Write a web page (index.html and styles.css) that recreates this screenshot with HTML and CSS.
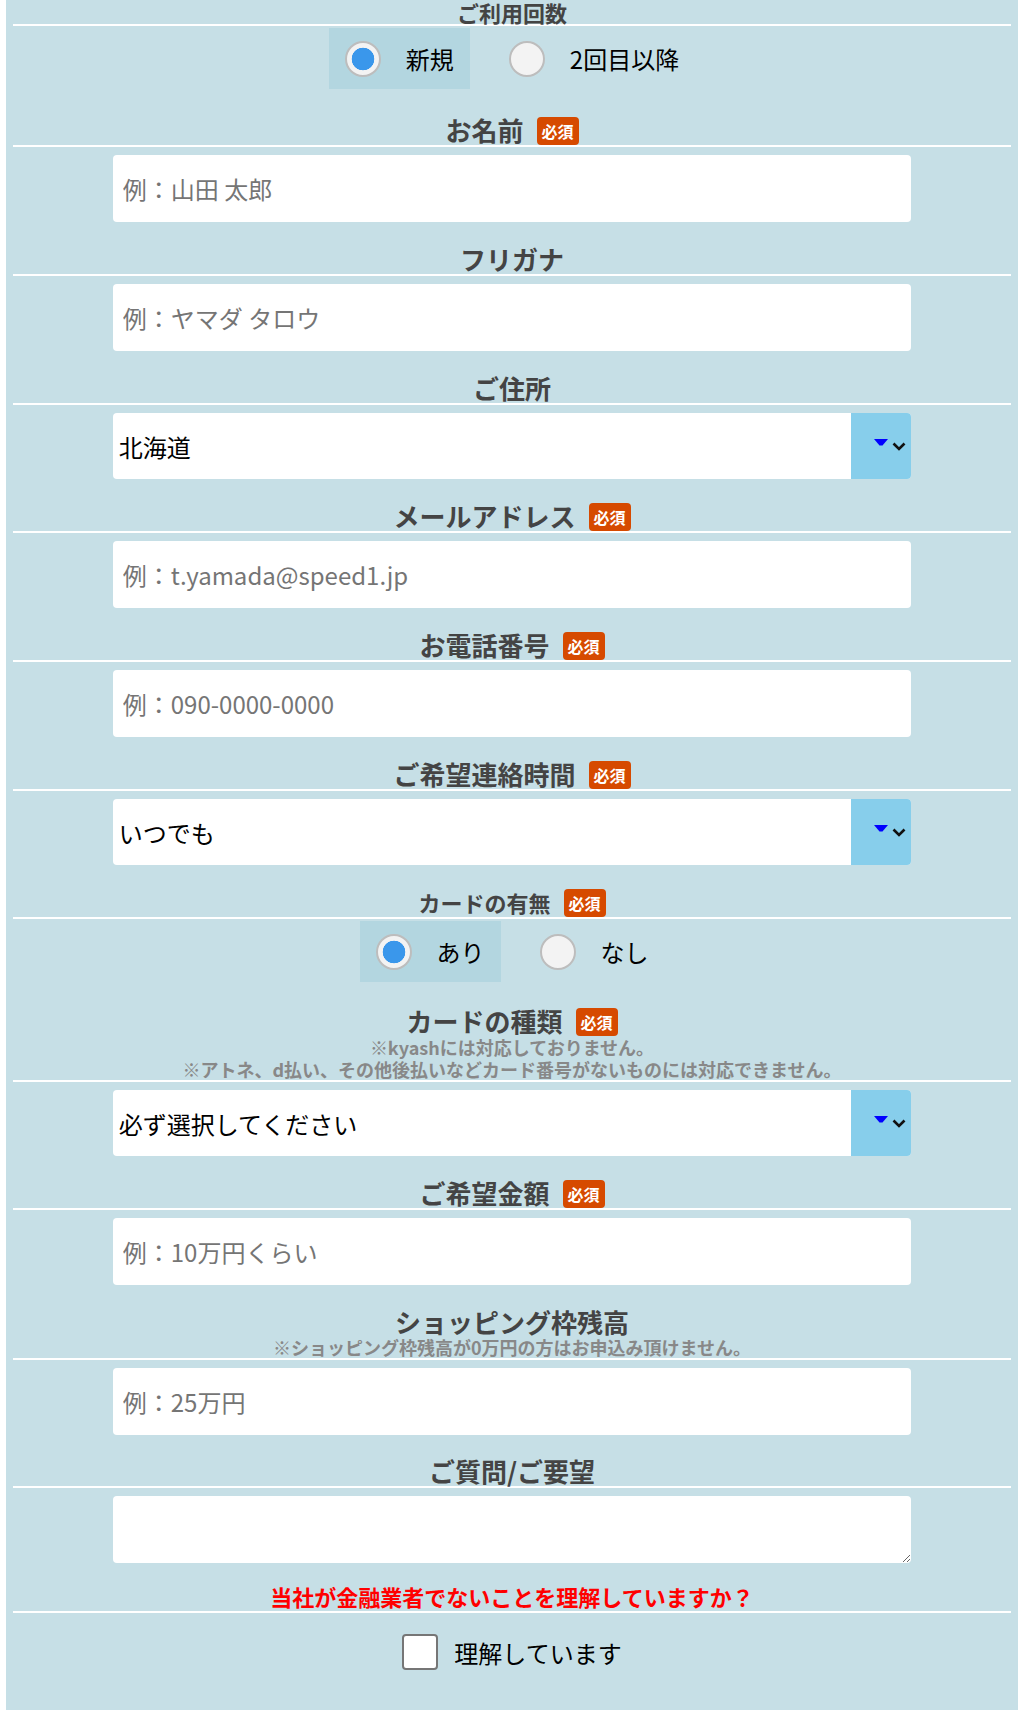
FILE: index.html
```html
<!DOCTYPE html>
<html lang="ja">
<head>
  <meta charset="utf-8">
  <title>お申込みフォーム</title>
  <link rel="stylesheet" href="styles.css">
</head>
<body>
  <div class="page">
    <form class="entry-form">
      <!-- ご利用回数 -->
      <div class="field field-radio">
        <div class="field-head">
          <div class="field-title"><h2 class="label label-sm label-top">ご利用回数</h2></div>
        </div>
        <div class="radio-group">
          <label class="radio-item is-checked"><input type="radio" name="times" checked><span>新規</span></label>
          <label class="radio-item"><input type="radio" name="times"><span>2回目以降</span></label>
        </div>
      </div>

      <div class="field">
        <div class="field-head">
          <div class="field-title"><h2 class="label">お名前</h2><span class="badge">必須</span></div>
        </div>
        <input class="text-input" type="text" placeholder="例：山田 太郎">
      </div>

      <div class="field">
        <div class="field-head">
          <div class="field-title"><h2 class="label">フリガナ</h2></div>
        </div>
        <input class="text-input" type="text" placeholder="例：ヤマダ タロウ">
      </div>

      <div class="field">
        <div class="field-head">
          <div class="field-title"><h2 class="label">ご住所</h2></div>
        </div>
        <div class="select-wrap">
          <select class="select">
            <option>北海道</option>
            <option>青森県</option>
            <option>岩手県</option>
          </select>
          <span class="select-arrow">
            <svg class="arrow-tri" width="14" height="7" viewBox="0 0 14 7"><path d="M0 0H14L8.5 6.5H5.5Z" fill="#0000ff"/></svg>
            <svg class="arrow-chev" width="14" height="9" viewBox="0 0 14 9"><path d="M1.5 1.5L7 7L12.5 1.5" fill="none" stroke="#111" stroke-width="2.6"/></svg>
          </span>
        </div>
      </div>

      <div class="field">
        <div class="field-head">
          <div class="field-title"><h2 class="label">メールアドレス</h2><span class="badge">必須</span></div>
        </div>
        <input class="text-input" type="email" placeholder="例：t.yamada@speed1.jp">
      </div>

      <div class="field">
        <div class="field-head">
          <div class="field-title"><h2 class="label">お電話番号</h2><span class="badge">必須</span></div>
        </div>
        <input class="text-input" type="tel" placeholder="例：090-0000-0000">
      </div>

      <div class="field">
        <div class="field-head">
          <div class="field-title"><h2 class="label">ご希望連絡時間</h2><span class="badge">必須</span></div>
        </div>
        <div class="select-wrap">
          <select class="select">
            <option>いつでも</option>
            <option>午前中</option>
            <option>午後</option>
          </select>
          <span class="select-arrow">
            <svg class="arrow-tri" width="14" height="7" viewBox="0 0 14 7"><path d="M0 0H14L8.5 6.5H5.5Z" fill="#0000ff"/></svg>
            <svg class="arrow-chev" width="14" height="9" viewBox="0 0 14 9"><path d="M1.5 1.5L7 7L12.5 1.5" fill="none" stroke="#111" stroke-width="2.6"/></svg>
          </span>
        </div>
      </div>

      <!-- カードの有無 -->
      <div class="field field-radio field-card">
        <div class="field-head">
          <div class="field-title"><h2 class="label label-sm">カードの有無</h2><span class="badge">必須</span></div>
        </div>
        <div class="radio-group">
          <label class="radio-item is-checked"><input type="radio" name="card" checked><span>あり</span></label>
          <label class="radio-item"><input type="radio" name="card"><span>なし</span></label>
        </div>
      </div>

      <div class="field">
        <div class="field-head">
          <div class="field-title"><h2 class="label">カードの種類</h2><span class="badge">必須</span></div>
          <p class="note">※kyashには対応しておりません。</p>
          <p class="note">※アトネ、d払い、その他後払いなどカード番号がないものには対応できません。</p>
        </div>
        <div class="select-wrap">
          <select class="select">
            <option>必ず選択してください</option>
            <option>VISA</option>
            <option>Mastercard</option>
            <option>JCB</option>
          </select>
          <span class="select-arrow">
            <svg class="arrow-tri" width="14" height="7" viewBox="0 0 14 7"><path d="M0 0H14L8.5 6.5H5.5Z" fill="#0000ff"/></svg>
            <svg class="arrow-chev" width="14" height="9" viewBox="0 0 14 9"><path d="M1.5 1.5L7 7L12.5 1.5" fill="none" stroke="#111" stroke-width="2.6"/></svg>
          </span>
        </div>
      </div>

      <div class="field">
        <div class="field-head">
          <div class="field-title"><h2 class="label">ご希望金額</h2><span class="badge">必須</span></div>
        </div>
        <input class="text-input" type="text" placeholder="例：10万円くらい">
      </div>

      <div class="field field-shopping">
        <div class="field-head">
          <div class="field-title"><h2 class="label">ショッピング枠残高</h2></div>
          <p class="note note-single">※ショッピング枠残高が0万円の方はお申込み頂けません。</p>
        </div>
        <input class="text-input" type="text" placeholder="例：25万円">
      </div>

      <div class="field field-last">
        <div class="field-head">
          <div class="field-title"><h2 class="label">ご質問/ご要望</h2></div>
        </div>
        <textarea class="text-input text-area"></textarea>
      </div>

      <div class="confirm">
        <div class="field-head">
          <p class="confirm-text">当社が金融業者でないことを理解していますか？</p>
        </div>
        <label class="confirm-row"><input type="checkbox"><span>理解しています</span></label>
      </div>
    </form>
  </div>
</body>
</html>
```

FILE: styles.css
```css
body {
  margin: 0;
  font-family: "Noto Sans CJK JP", "Noto Sans", sans-serif;
  background-color: #ffffff;
}

.page {
  margin: 0 4px 0 6px;
  padding: 0 7px;
  min-height: 1710px;
  box-sizing: border-box;
  background-color: #c6dfe6;
}

/* field blocks */
.field {
  margin-bottom: 22px;
}
.field-radio {
  margin-bottom: 26px;
}
.field-card {
  margin-bottom: 24px;
}
.field-shopping {
  margin-bottom: 21px;
}
.field-last {
  margin-bottom: 18px;
}
.field-head {
  border-bottom: 2px solid #ffffff;
  text-align: center;
}
.field-title {
  display: flex;
  justify-content: center;
  align-items: flex-end;
  gap: 13px;
}
.label {
  margin: 0;
  font-size: 26px;
  line-height: 30px;
  font-weight: bold;
  color: #444444;
}
.label-sm {
  font-size: 22px;
}
.label-top {
  line-height: 24px;
}
.badge {
  padding: 0 5px;
  border-radius: 4px;
  background-color: #d64a00;
  color: #ffffff;
  font-size: 16px;
  line-height: 28px;
  font-weight: bold;
}
.note {
  margin: 0;
  font-size: 18px;
  line-height: 22px;
  font-weight: bold;
  color: #888888;
}
.note-single {
  line-height: 21px;
}

/* inputs */
.text-input {
  display: block;
  width: 80%;
  height: 67px;
  margin: 8px auto 0;
  padding: 0 10px;
  box-sizing: border-box;
  border: none;
  border-radius: 4px;
  background-color: #ffffff;
  font-family: inherit;
  font-size: 24px;
  color: #000000;
}
.text-input::placeholder {
  color: #757575;
}
.text-area {
  padding: 8px 10px;
}

.select-wrap {
  display: flex;
  width: 80%;
  height: 66px;
  margin: 8px auto 0;
  border-radius: 4px;
  overflow: hidden;
  background-color: #ffffff;
}
.select {
  flex: 1;
  -webkit-appearance: none;
  appearance: none;
  border: none;
  padding: 0 6px;
  background: transparent;
  font-family: inherit;
  font-size: 24px;
  color: #000000;
}
.select-arrow {
  display: flex;
  align-items: center;
  justify-content: flex-end;
  gap: 4px;
  width: 60px;
  padding-right: 5px;
  box-sizing: border-box;
  background-color: #87ceeb;
}
.arrow-tri {
  margin-bottom: 7px;
}

/* radio buttons */
.radio-group {
  display: flex;
  justify-content: center;
  gap: 23px;
  margin-top: 2px;
}
.radio-item {
  display: flex;
  align-items: center;
  gap: 25px;
  height: 61px;
  padding: 0 16px;
  font-size: 24px;
  color: #000000;
}
.radio-item.is-checked {
  background-color: #b3d6e0;
}
.radio-item input {
  -webkit-appearance: none;
  appearance: none;
  width: 36px;
  height: 36px;
  margin: 0;
  box-sizing: border-box;
  border: 2px solid #bdbdbd;
  border-radius: 50%;
  background-color: #f3f3f3;
}
.radio-item input:checked {
  background: radial-gradient(circle, #3a97eb 0 11px, #f3f3f3 11.6px);
}

/* confirmation */
.confirm-text {
  margin: 0;
  font-size: 22px;
  line-height: 30px;
  font-weight: bold;
  color: #ff0000;
}
.confirm-row {
  display: flex;
  justify-content: center;
  align-items: center;
  gap: 16px;
  margin-top: 21px;
  font-size: 24px;
  color: #000000;
}
.confirm-row input {
  -webkit-appearance: none;
  appearance: none;
  width: 36px;
  height: 36px;
  margin: 0;
  box-sizing: border-box;
  border: 2px solid #767676;
  border-radius: 4px;
  background-color: #ffffff;
}
```
